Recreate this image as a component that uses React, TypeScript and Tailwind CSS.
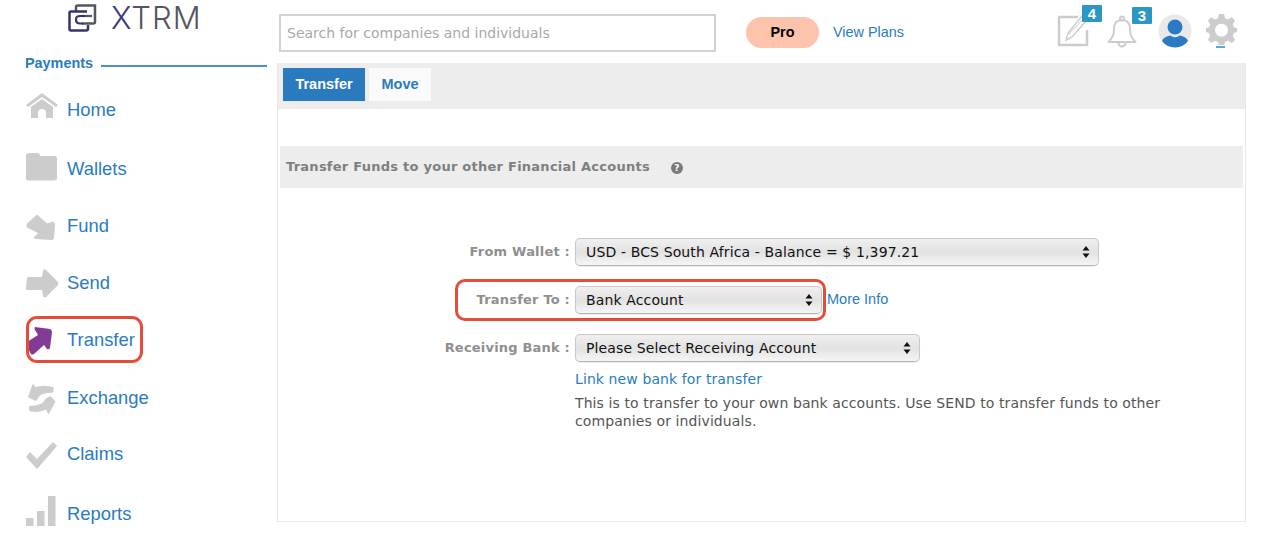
import React from "react";

const G = "#cccccc";

const Home = () => (
  <svg width="32" height="26" viewBox="0 0 32 26" fill={G}>
    <path d="M16 0 L32 12 L30 14 L16 4 L2 14 L0 12 Z" />
    <path d="M5 14 L16 6 L27 14 V25 H20 V20 Q20 16 16 16 Q12 16 12 20 V25 H5 Z" />
  </svg>
);
const Folder = () => (
  <svg width="32" height="28" viewBox="0 0 32 28" fill={G}>
    <path d="M0 3 Q0 0 3 0 H11 Q14 0 14 3 H29 Q31 3 31 6 V25 Q31 27.5 28 27.5 H3 Q0 27.5 0 25 Z" />
  </svg>
);
const Fund = () => (
  <svg width="30" height="27" viewBox="0 0 30 27" fill={G} stroke={G} strokeLinejoin="round">
    <path d="M1 10 L11 1 L21 10 L27 8 L28.500 10 L27.500 24.500 L26 25.500 L9 24.500 L8.500 23 L13 19 L1 13 Z" />
  </svg>
);
const Send = () => (
  <svg width="33" height="29" viewBox="0 0 33 29" fill={G}>
    <path d="M2 8 H16 L17 1 Q18 0 20 1 L32 13 Q33 14.500 32 16 L20 28 Q18 29 17 27 L16 21 H1 Q0 21 0 19 L1 9 Q1 8 2 8 Z" />
  </svg>
);
const TransferIcon = () => (
  <svg width="27" height="30" viewBox="0 0 27 30" fill="#843b96">
    <path d="M9 1 L24 3 Q26 4 26 6 L24 22 Q23 24 21 23 L18 19 L8 28 Q6 29 5 28 L1 21 Q0 18 1 16 L12 9 L9 4 Q8 2 9 1 Z" />
  </svg>
);
const Exchange = () => (
  <svg width="30" height="31" viewBox="0 0 30 31" fill={G} stroke={G} strokeWidth="1" strokeLinejoin="round">
    <path d="M2.500 13 L7 0.500 L9.500 3.500 Q18 1 27 3.500 L27 8 Q20 8 14 10.500 L10 16.500 Z" />
    <path d="M29 17.500 L24.500 12.500 L20.500 14.500 L16 20 Q10 22.500 3.500 22.500 L4 27 Q13 28.500 20.500 25 L22.500 29.500 Z" />
  </svg>
);
const Check = () => (
  <svg width="32" height="27" viewBox="0 0 32 27" fill={G}>
    <path d="M0 15 L4 10 L11 17 L27 0 L31 4 L11 27 Z" />
  </svg>
);
const Bars = () => (
  <svg width="30" height="30" viewBox="0 0 30 30" fill={G}>
    <rect x="0" y="22" width="7.500" height="8" />
    <rect x="11" y="15" width="7.500" height="15" />
    <rect x="22" y="0" width="7.500" height="30" />
  </svg>
);
const Logo = () => (
  <svg width="29" height="28" viewBox="0 0 29 28" fill="none" strokeWidth="2.500">
    <path d="M8 7 V3 Q8 1.500 10 1.500 H27 V18 Q27 19.500 25 19.500 H14" stroke="#555560" />
    <path d="M13 12 H24" stroke="#555560" strokeWidth="2.200" />
    <path d="M19 7.500 H3 Q1.500 7.500 1.500 9 V25 Q1.500 26.500 3 26.500 H18 Q20 26.500 20 25 V21" stroke="#33346f" />
    <path d="M17 12 H12 Q8 12 8 15.500 Q8 19.500 12 19.500 H15" stroke="#33346f" strokeWidth="2.200" />
  </svg>
);
const Note = () => (
  <svg width="32" height="32" viewBox="0 0 32 32" fill="none" stroke={G}>
    <path d="M30 15 V30 H2 V2 H21" strokeWidth="2.500" />
    <path d="M25 1 L30 5 L15 22 L9 25 L11 18 Z" strokeWidth="1.500" />
    <path d="M12 19 L26 4" strokeWidth="1" />
  </svg>
);
const Bell = () => (
  <svg width="30" height="33" viewBox="0 0 30 33" fill="none" stroke={G} strokeWidth="2">
    <circle cx="15" cy="3.500" r="2" />
    <path d="M15 5 C8 5 7 10 7 14 C7 21 5 23 1.500 27 H28.500 C25 23 23 21 23 14 C23 10 22 5 15 5 Z" strokeLinejoin="round" />
    <path d="M11.500 28 A3.500 3.500 0 0 0 18.500 28" />
  </svg>
);
const Avatar = () => (
  <svg width="34" height="34" viewBox="0 0 34 34">
    <circle cx="17" cy="17" r="16.500" fill="#e9e9e9" />
    <circle cx="17" cy="13" r="7.500" fill="#2a7bc3" />
    <path d="M4 27 Q5 23 12 21.500 Q17 25 22 21.500 Q29 23 30 27 Q25 33.500 17 33.500 Q9 33.500 4 27 Z" fill="#2a7bc3" />
  </svg>
);
const Gear = () => (
  <svg width="31" height="31" viewBox="0 0 24 24" fill={G}>
    <path fillRule="evenodd" d="M10 0 H14 L14.700 3.300 L17.100 4.300 L20 2.500 L22.500 5 L20.700 7.900 L21.700 10.300 L24 11 V14 L21.700 14.700 L20.700 17.100 L22.500 20 L20 22.500 L17.100 20.700 L14.700 21.700 L14 24 H10 L9.300 21.700 L6.900 20.700 L4 22.500 L1.500 20 L3.300 17.100 L2.300 14.700 L0 14 V11 L2.300 10.300 L3.300 7.900 L1.500 5 L4 2.500 L6.900 4.300 L9.300 3.300 Z M12 7.500 A5 5 0 1 0 12 17.500 A5 5 0 1 0 12 7.500 Z" />
  </svg>
);
const Arrows = () => (
  <svg width="8" height="14" viewBox="0 0 8 14" fill="#111">
    <path d="M4 1 L7.500 5.500 H0.500 Z M4 13 L0.500 8.500 H7.500 Z" />
  </svg>
);

const nav: { label: string; gap: string; shift: string; icon: React.ReactNode; active?: boolean }[] = [
  { label: "Home", gap: "mt-0", shift: "mb-[9px]", icon: <Home /> },
  { label: "Wallets", gap: "mt-[19px]", shift: "mb-[5px]", icon: <Folder /> },
  { label: "Fund", gap: "mt-[17px]", shift: "mt-[2px]", icon: <Fund /> },
  { label: "Send", gap: "mt-[17px]", shift: "mt-0", icon: <Send /> },
  { label: "Transfer", gap: "mt-[17px]", shift: "mt-[1px]", icon: <TransferIcon />, active: true },
  { label: "Exchange", gap: "mt-[18px]", shift: "mt-[2px]", icon: <Exchange /> },
  { label: "Claims", gap: "mt-[16px]", shift: "mt-[2px]", icon: <Check /> },
  { label: "Reports", gap: "mt-[20px]", shift: "mb-[6px]", icon: <Bars /> },
];

const Sel = ({ text, w }: { text: string; w: string }) => (
  <div className={`${w} h-[28px] flex items-center justify-between pl-[10px] pr-[8px] rounded-[5px] border border-[#c8c8c8] border-b-[#b5b5b5] bg-gradient-to-b from-[#f0f0f0] via-[#e2e2e2] to-[#f5f5f5] text-[14px] tracking-[0.13px] text-[#111] shadow-[0_1px_1px_rgba(0,0,0,0.08)]`}>
    <span>{text}</span>
    <Arrows />
  </div>
);

const Row = ({ label, children, mb }: { label: string; children: React.ReactNode; mb: string }) => (
  <div className={`flex items-center ${mb}`}>
    <div className="w-[297px] text-right pr-[5px] text-[13px] font-bold text-[#8f8f8f] tracking-[0.2px]">{label}</div>
    {children}
  </div>
);

export default function App() {
  return (
    <div className="relative w-[1285px] h-[548px] overflow-hidden bg-white flex font-['Liberation_Sans',sans-serif]">
      <aside className="w-[277px] shrink-0 pl-[25px]">
        <div className="h-[54px] pl-[43px] pt-[4px] flex items-start gap-[14px]">
          <Logo />
          <span className="font-['Inter',sans-serif] font-light text-[31px] leading-[28px] tracking-[1px] text-[#565660]">
            <span className="text-[#3a3a7c]">X</span>TRM
          </span>
        </div>
        <div className="h-[20px] flex items-center gap-[8px] pr-[10px]">
          <span className="text-[14.4px] font-bold text-[#2a7bc3]">Payments</span>
          <div className="flex-1 h-[2px] mt-[4px] bg-[#4a90cf]" />
        </div>
        <nav className="pt-[16px]">
          {nav.map((n) => (
            <div key={n.label} className={`relative flex items-center h-[40px] ${n.gap} text-[18.4px] text-[#2a7bc3]`}>
              <div className={`w-[42px] flex items-center pl-[1px] ${n.shift}`}>{n.icon}</div>
              <span>{n.label}</span>
              {n.active && <div className="absolute left-[1px] -top-[4px] w-[117px] h-[47px] rounded-[11px] border-[3px] border-[#e34d3a]" />}
            </div>
          ))}
        </nav>
      </aside>

      <main className="w-[969px] shrink-0">
        <header className="h-[63px] flex items-start">
          <div className="ml-[2px] mt-[14px] w-[437px] h-[38px] border-2 border-[#d2d2d2] flex items-center pl-[6px] text-[14px] text-[#a8a8a8] font-['DejaVu_Sans',sans-serif]">
            Search for companies and individuals
          </div>
          <div className="ml-[30px] mt-[17px] w-[73px] h-[31px] rounded-full bg-[#fdc3ac] flex items-center justify-center text-[14.4px] font-bold text-black">Pro</div>
          <div className="ml-[14px] mt-[23px] text-[14.4px] leading-[18px] text-[#2a7bc3]">View Plans</div>
          <div className="ml-auto mr-[9px] flex items-start">
            <div className="relative mt-[15px]">
              <Note />
              <div className="absolute -top-[10px] left-[25px] w-[20px] h-[17px] bg-[#2b97c4] rounded-[1px] text-white text-[15px] font-bold leading-[17px] text-center">4</div>
            </div>
            <div className="relative ml-[18px] mt-[15px]">
              <Bell />
              <div className="absolute -top-[8px] left-[25px] w-[20px] h-[17px] bg-[#2b97c4] rounded-[1px] text-white text-[15px] font-bold leading-[17px] text-center">3</div>
            </div>
            <div className="ml-[21px] mt-[14px]"><Avatar /></div>
            <div className="relative ml-[14px] mt-[14px]">
              <Gear />
              <div className="absolute top-[32px] left-[10px] w-[9px] h-[2px] bg-[#5aa7d8]" />
            </div>
          </div>
        </header>

        <section className="h-[459px] border border-t-0 border-[#e8e8e8]">
          <div className="h-[46px] bg-[#ededed] pt-[5px] pl-[5px] flex gap-[4px] text-[14.5px] font-bold">
            <div className="w-[82px] h-[33px] bg-[#2a7bbd] text-white flex items-center justify-center">Transfer</div>
            <div className="w-[62px] h-[33px] bg-[#fafafa] text-[#2a7bbd] flex items-center justify-center">Move</div>
          </div>
          <div className="mt-[37px] mx-[2px] h-[42px] bg-[#ededed] flex items-center pl-[6px] text-[13px] font-bold text-[#7f7f7f] font-['DejaVu_Sans',sans-serif]">
            <span className="tracking-[0.25px]">Transfer Funds to your other Financial Accounts</span>
            <span className="ml-[21px] mt-[2px] w-[12px] h-[12px] rounded-full bg-[#7a7a7a] text-white text-[9px] leading-[12px] text-center">?</span>
          </div>
          <div className="relative pt-[50px] font-['DejaVu_Sans',sans-serif]">
            <Row label="From Wallet :" mb="mb-[20px]"><Sel text="USD - BCS South Africa - Balance = $ 1,397.21" w="w-[524px]" /></Row>
            <Row label="Transfer To :" mb="mb-[20px]">
              <Sel text="Bank Account" w="w-[247px]" />
              <span className="ml-[5px] text-[14.5px] text-[#2a7bc3] font-['Liberation_Sans',sans-serif]">More Info</span>
            </Row>
            <Row label="Receiving Bank :" mb="mb-[8px]"><Sel text="Please Select Receiving Account" w="w-[345px]" /></Row>
            <div className="ml-[297px] w-[610px] text-[14px] leading-[18px] tracking-[0.1px] text-[#555]">
              <div className="text-[#2a7bc3] mb-[6px]">Link new bank for transfer</div>
              <p>This is to transfer to your own bank accounts. Use SEND to transfer funds to other companies or individuals.</p>
            </div>
            <div className="absolute left-[177px] top-[91px] w-[371px] h-[42px] rounded-[10px] border-[3px] border-[#e34d3a]" />
          </div>
        </section>
      </main>
    </div>
  );
}
